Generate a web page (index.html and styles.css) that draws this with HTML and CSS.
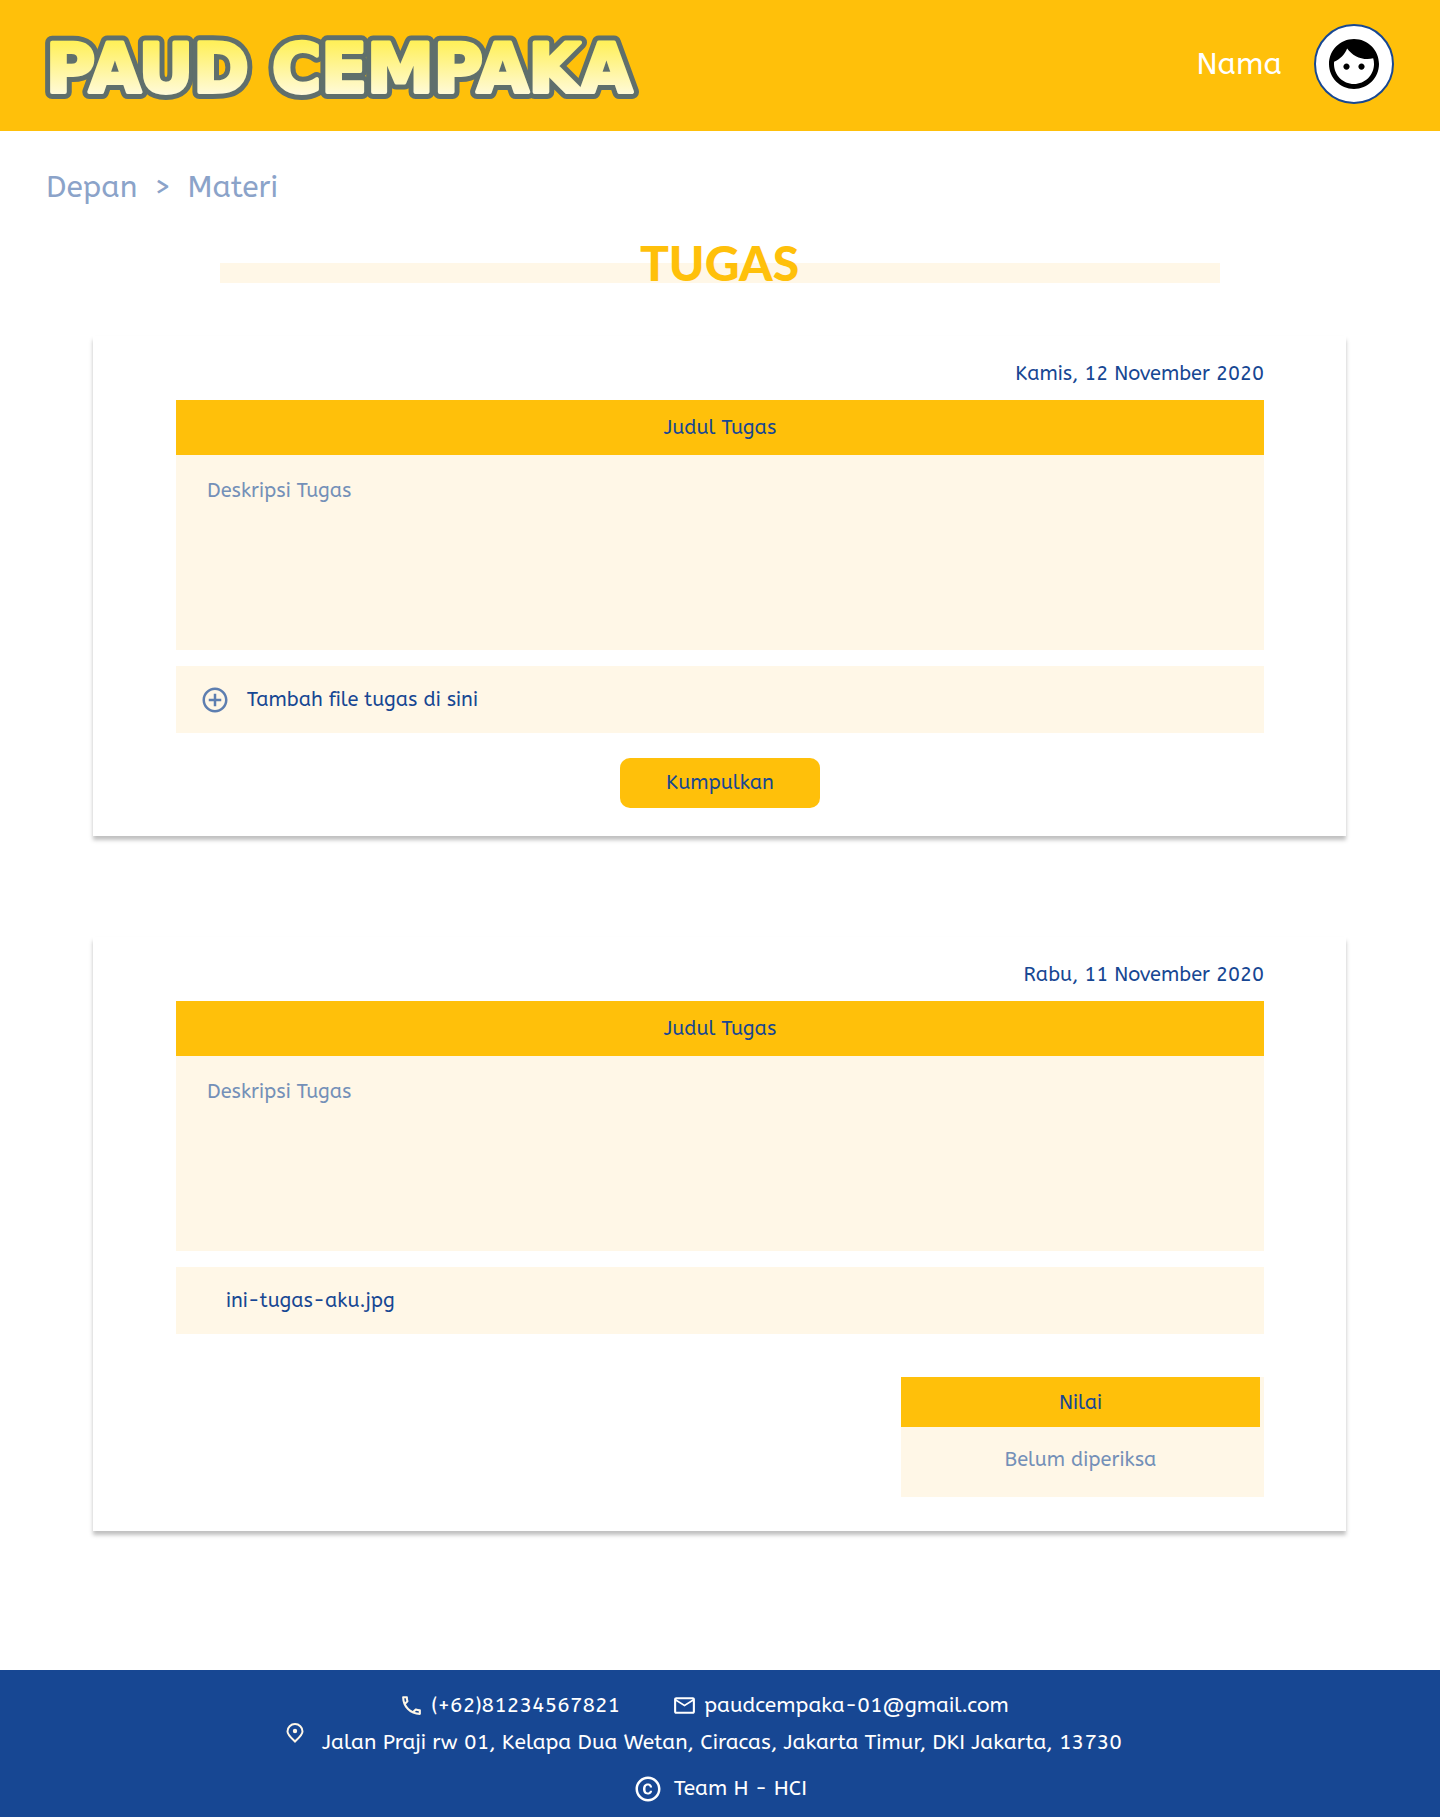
FILE: index.html
```html
<!DOCTYPE html>
<html lang="id">
<head>
<meta charset="utf-8">
<meta name="viewport" content="width=device-width, initial-scale=1">
<title>PAUD Cempaka - Tugas</title>
<link rel="stylesheet" href="styles.css">
</head>
<body>
<header class="topbar">
  <a class="brand" href="#" aria-label="PAUD Cempaka">
    <svg class="brand-logo" viewBox="0 0 616 80" width="616" height="80">
      <defs>
        <linearGradient id="face" gradientUnits="userSpaceOnUse" x1="0" y1="18" x2="0" y2="70">
          <stop offset="0" stop-color="#fff05a"/>
          <stop offset="1" stop-color="#fffad8"/>
        </linearGradient>
      </defs>
      <g class="brand-outline"><text id="wordmark" x="6" y="68">PAUD CEMPAKA</text></g>
      <use class="brand-face" href="#wordmark"/>
    </svg>
  </a>
  <a class="user" href="#">
    <span class="user-name">Nama</span>
    <span class="avatar">
      <svg viewBox="0 0 24 24" width="60" height="60" aria-hidden="true"><path d="M9 11.75c-.69 0-1.25.56-1.25 1.25s.56 1.25 1.25 1.25 1.25-.56 1.25-1.25-.56-1.25-1.25-1.25zm6 0c-.69 0-1.25.56-1.25 1.25s.56 1.25 1.25 1.25 1.25-.56 1.25-1.25-.56-1.25-1.25-1.25zM12 2C6.48 2 2 6.48 2 12s4.48 10 10 10 10-4.48 10-10S17.52 2 12 2zm0 18c-4.41 0-8-3.59-8-8 0-.29.02-.58.05-.86 2.36-1.05 4.23-2.98 5.21-5.37C11.07 8.33 14.05 10 17.42 10c.78 0 1.53-.09 2.25-.26.21.71.33 1.47.33 2.26 0 4.41-3.59 8-8 8z"/></svg>
    </span>
  </a>
</header>

<nav class="breadcrumb" aria-label="Breadcrumb">
  <a href="#">Depan</a>
  <span>&gt;</span>
  <a href="#">Materi</a>
</nav>

<main class="content">
  <h1 class="page-title">TUGAS</h1>

  <article class="card">
    <p class="date">Kamis, 12 November 2020</p>
    <h2 class="task-title">Judul Tugas</h2>
    <p class="task-text">Deskripsi Tugas</p>
    <label class="file-row file-add">
      <svg viewBox="0 0 24 24" width="30" height="30" aria-hidden="true"><path d="M13 7h-2v4H7v2h4v4h2v-4h4v-2h-4V7zm-1-5C6.48 2 2 6.48 2 12s4.48 10 10 10 10-4.48 10-10S17.52 2 12 2zm0 18c-4.41 0-8-3.59-8-8s3.59-8 8-8 8 3.59 8 8-3.59 8-8 8z"/></svg>
      <span>Tambah file tugas di sini</span>
      <input class="file-input" type="file">
    </label>
    <button class="submit" type="submit">Kumpulkan</button>
  </article>

  <article class="card">
    <p class="date">Rabu, 11 November 2020</p>
    <h2 class="task-title">Judul Tugas</h2>
    <p class="task-text">Deskripsi Tugas</p>
    <a class="file-row file-sent" href="#">ini-tugas-aku.jpg</a>
    <section class="grade">
      <h3 class="grade-title">Nilai</h3>
      <p class="grade-value">Belum diperiksa</p>
    </section>
  </article>
</main>

<footer class="footer">
  <div class="contacts">
    <a class="contact" href="tel:+6281234567821">
      <svg class="cream" viewBox="0 0 24 24" width="25" height="25" aria-hidden="true"><path d="M6.54 5c.06.89.21 1.76.45 2.59l-1.2 1.2c-.41-1.2-.67-2.47-.76-3.79h1.51m9.86 12.02c.85.24 1.72.39 2.6.45v1.49c-1.32-.09-2.59-.35-3.8-.75l1.2-1.19M7.500 3H4c-.55 0-1 .45-1 1 0 9.390 7.610 17 17 17 .55 0 1-.45 1-1v-3.490c0-.55-.45-1-1-1-1.240 0-2.450-.2-3.570-.57-.1-.04-.21-.05-.31-.05-.26 0-.51.1-.71.29l-2.200 2.200c-2.830-1.450-5.150-3.760-6.590-6.590l2.200-2.200c.28-.28.36-.67.25-1.020C8.700 6.450 8.500 5.250 8.500 4c0-.55-.45-1-1-1z"/></svg>
      <span>(+62)81234567821</span>
    </a>
    <a class="contact" href="mailto:paudcempaka-01@gmail.com">
      <svg viewBox="0 0 24 24" width="25" height="25" aria-hidden="true"><path d="M22 6c0-1.100-.9-2-2-2H4c-1.100 0-2 .9-2 2v12c0 1.100.9 2 2 2h16c1.100 0 2-.9 2-2V6zm-2 0l-8 5-8-5h16zm0 12H4V8l8 5 8-5v10z"/></svg>
      <span>paudcempaka-01@gmail.com</span>
    </a>
  </div>
  <address class="place">
    <svg class="cream" viewBox="0 0 18 20" width="18" height="20" aria-hidden="true"><path class="pin" d="M9 18.500C5 14.600 1.500 11.600 1.500 8.400a7.500 7.300 0 0 1 15 0C16.500 11.600 13 14.600 9 18.500z"/><circle cx="9" cy="8" r="2.200"/></svg>
    <span>Jalan Praji rw 01, Kelapa Dua Wetan, Ciracas, Jakarta Timur, DKI Jakarta, 13730</span>
  </address>
  <p class="copyright">
    <svg viewBox="0 0 24 24" width="30" height="30" aria-hidden="true"><path d="M10.080 10.860c.05-.33.16-.62.3-.87s.34-.46.59-.62c.24-.15.54-.22.91-.23.23.01.44.05.63.13.2.09.38.21.52.36s.25.33.34.53.13.42.14.64h1.790c-.02-.47-.11-.9-.28-1.290s-.4-.73-.7-1.010-.66-.5-1.080-.66-.88-.23-1.390-.23c-.65 0-1.220.11-1.700.34s-.88.53-1.200.92-.56.84-.71 1.360S8 11.290 8 11.870v.27c0 .58.08 1.120.23 1.640s.39.97.71 1.350.72.69 1.200.91c.48.22 1.050.34 1.700.34.47 0 .91-.08 1.320-.23s.77-.36 1.080-.63.56-.58.74-.94.29-.74.3-1.150h-1.790c-.01.21-.06.4-.15.58s-.21.33-.36.46-.32.23-.52.3c-.19.07-.39.09-.6.1-.36-.01-.66-.08-.89-.23-.25-.16-.45-.37-.59-.62s-.25-.55-.3-.88-.08-.67-.08-1v-.27c0-.35.03-.68.08-1.010zM12 2C6.480 2 2 6.480 2 12s4.480 10 10 10 10-4.480 10-10S17.520 2 12 2zm0 18c-4.410 0-8-3.590-8-8s3.590-8 8-8 8 3.590 8 8-3.590 8-8 8z"/></svg>
    <span>Team H - HCI</span>
  </p>
</footer>
</body>
</html>
```
FILE: styles.css
```css
:root {
  --yellow: #ffc00a;
  --cream: #fff7e7;
  --blue: #174793;
}

* {
  box-sizing: border-box;
}

body {
  margin: 0;
  display: flex;
  flex-direction: column;
  min-height: 100vh;
  background: #fff;
  color: var(--blue);
  font: 400 20px/24px "ABeeZee", "Noto Sans", sans-serif;
}

h1, h2, h3, p {
  margin: 0;
  font-weight: 400;
}

h2, h3 {
  font-size: 20px;
}

a {
  color: inherit;
  text-decoration: none;
}

svg {
  flex: none;
  display: block;
  fill: currentColor;
}

.topbar {
  display: flex;
  align-items: center;
  justify-content: space-between;
  padding: 24px 46px 27px 40px;
  background: var(--yellow);
}

.brand-logo {
  overflow: visible;
  font: 700 67px/1 "DejaVu Sans", sans-serif;
  stroke-linejoin: round;
}

.brand-outline {
  fill: #5f6f6c;
  stroke: #5f6f6c;
  stroke-width: 14px;
}

.brand-face {
  fill: url(#face);
  stroke: url(#face);
  stroke-width: 4px;
}

.user {
  display: flex;
  align-items: center;
  gap: 32px;
  color: #fff;
  font-size: 30px;
  line-height: 36px;
}

.avatar {
  display: grid;
  place-items: center;
  width: 80px;
  height: 80px;
  border: 2px solid var(--blue);
  border-radius: 50%;
  background: #fff;
  color: #000;
}

.breadcrumb {
  display: flex;
  gap: 16px;
  padding: 36px 46px 0;
  color: #8ba3c9;
  font-size: 30px;
  line-height: 40px;
}

.content {
  display: flex;
  flex-direction: column;
  align-items: center;
  padding: 36px 94px 139px 93px;
}

.page-title {
  width: 100%;
  max-width: 1000px;
  margin-bottom: 53px;
  background: linear-gradient(var(--cream), var(--cream)) bottom / 100% 20px no-repeat;
  color: var(--yellow);
  font: 900 48px/40px "Lato", sans-serif;
  text-align: center;
}

.card {
  display: flex;
  flex-direction: column;
  width: 100%;
  padding: 26px 82px 28px 83px;
  background: #fff;
  box-shadow: 0 4px 4px rgba(0, 0, 0, 0.25);
}

.card + .card {
  margin-top: 101px;
  padding-bottom: 34px;
}

.date {
  margin-bottom: 14px;
  text-align: right;
}

.task-title {
  padding: 16px 30px 15px;
  background: var(--yellow);
  text-align: center;
}

.task-text {
  min-height: 195px;
  padding: 24px 31px;
  background: var(--cream);
  color: #7490b8;
}

.file-row {
  display: flex;
  align-items: center;
  min-height: 67px;
  margin-top: 16px;
  background: var(--cream);
}

.file-add {
  gap: 17px;
  padding: 0 24px;
  cursor: pointer;
}

.file-add svg {
  color: #5d7eb0;
}

.file-input {
  position: absolute;
  width: 1px;
  height: 1px;
  opacity: 0;
}

.file-sent {
  padding: 0 50px;
}

.submit {
  align-self: center;
  width: 200px;
  margin-top: 25px;
  padding: 13px 0;
  border: 0;
  border-radius: 10px;
  background: var(--yellow);
  color: inherit;
  font: inherit;
}

.grade {
  align-self: flex-end;
  width: 363px;
  margin-top: 43px;
  padding-right: 4px;
  background: var(--cream);
  text-align: center;
}

.grade-title {
  padding: 14px 0 12px;
  background: var(--yellow);
}

.grade-value {
  padding: 21px 0 25px;
  color: #7490b8;
}

.footer {
  display: flex;
  flex-direction: column;
  align-items: center;
  margin-top: auto;
  padding: 23px 20px 13px;
  background: var(--blue);
  color: #fff;
  font-size: 21px;
}

.contacts {
  display: flex;
  flex-wrap: wrap;
  gap: 52px;
  padding-right: 32px;
}

.contact {
  display: flex;
  align-items: center;
  gap: 7px;
}

.cream {
  color: var(--cream);
}

.place {
  display: flex;
  gap: 18px;
  padding: 5px 32px 0 0;
  font-style: normal;
}

.place span {
  padding-top: 8px;
}

.pin {
  fill: none;
  stroke: currentColor;
  stroke-width: 2px;
}

.copyright {
  display: flex;
  align-items: center;
  gap: 11px;
  padding-top: 19px;
}
```
